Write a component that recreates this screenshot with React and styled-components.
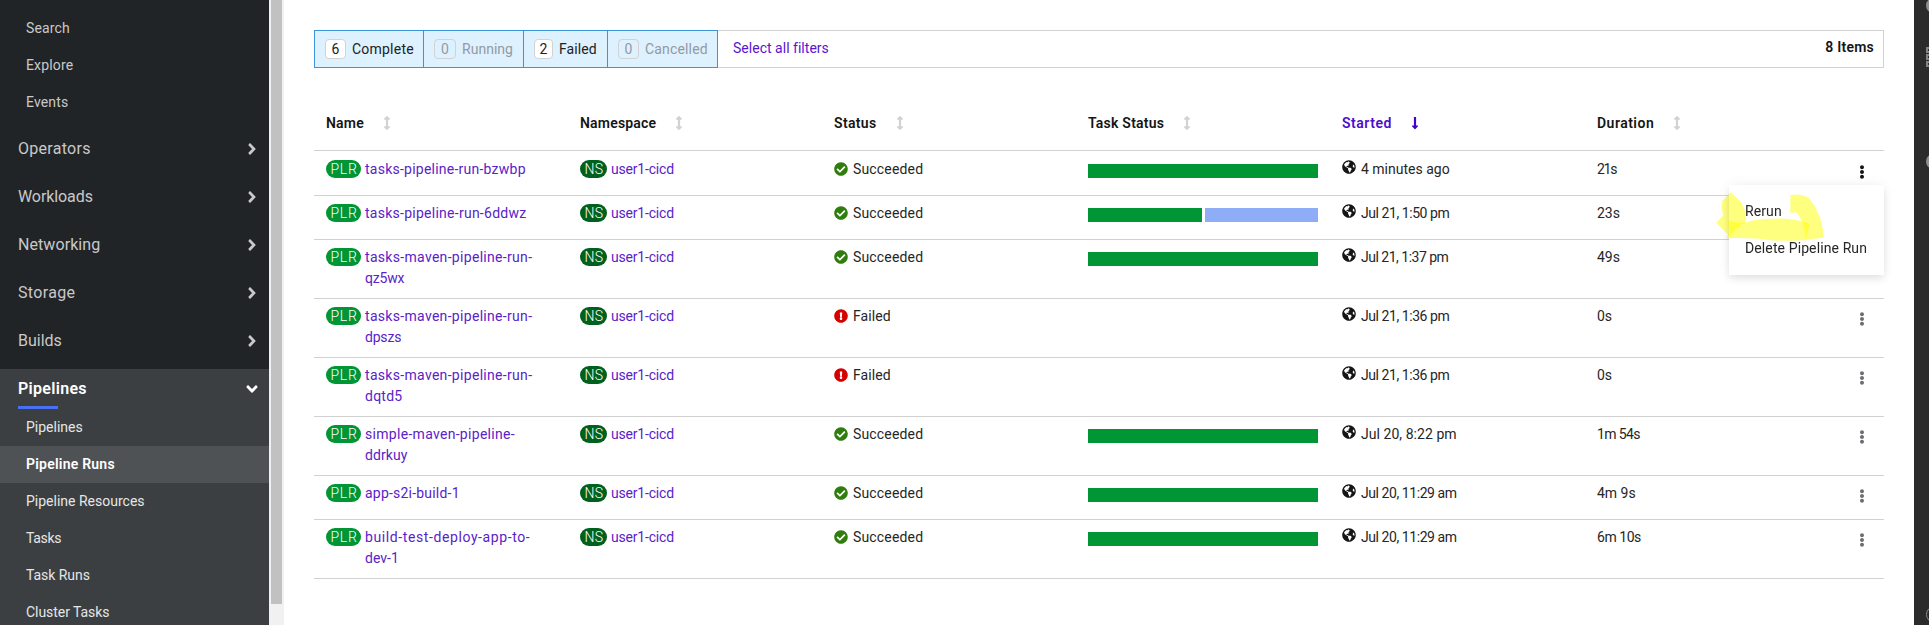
import React from 'react';
import styled, { createGlobalStyle } from 'styled-components';
import {
  FaAngleDown,
  FaAngleRight,
  FaArrowsAltV,
  FaCheckCircle,
  FaEllipsisV,
  FaExclamationCircle,
  FaGlobeAmericas,
  FaLongArrowAltDown,
} from 'react-icons/fa';

const GlobalStyle = createGlobalStyle`
  *, *::before, *::after { box-sizing: border-box; }
  body {
    margin: 0;
    overflow: hidden;
    background: #fff;
    color: #151515;
    font-family: Roboto, "Liberation Sans", sans-serif;
    font-size: 14px;
    line-height: 21px;
  }
  svg { display: block; flex: none; }
`;

const tracking = {
  Search: 0.13, Explore: 0.16, Events: 0.15, Operators: 0.29, Workloads: -0.09,
  Networking: 0.08, Storage: 0.33, Builds: 0, 'Pipeline Runs': 0.23,
  Tasks: -0.3, 'Task Runs': -0.05, 'Cluster Tasks': -0.05,
  Complete: 0.22, Running: 0.03, Failed: 0.09, Cancelled: 0.16,
  'Select all filters': 0.02, '8 Items': 0.24,
  Name: 0.2, Namespace: 0.19, Status: 0.35, 'Task Status': 0.23, Started: 0.52, Duration: 0.48,
  'tasks-pipeline-run-bzwbp': 0.24, 'tasks-pipeline-run-6ddwz': 0.26,
  'tasks-maven-pipeline-run-': 0.31, 'simple-maven-pipeline-': 0.3,
  'build-test-deploy-app-to-': 0.6, 'app-s2i-build-1': 0.21,
  qz5wx: -0.2, dpszs: -0.2, dqtd5: 0.25, ddrkuy: 0.1,
  'user1-cicd': -0.19, PLR: 0.77, NS: 0.5, Succeeded: 0.17,
  'Jul 21, 1:50 pm': -0.44, 'Jul 21, 1:37 pm': -0.5, 'Jul 21, 1:36 pm': -0.44,
  'Jul 20, 8:22 pm': 0.05, 'Jul 20, 11:29 am': -0.43,
  '21s': -1.3, '1m 54s': -0.6, '6m 10s': -0.46,
  Rerun: 0.11, 'Delete Pipeline Run': 0.11,
};

const TextRun = styled.span`
  letter-spacing: ${(p) => p.$track}px;
  white-space: nowrap;
`;

function Text({ children, track }) {
  return <TextRun $track={track ?? tracking[children] ?? 0}>{children}</TextRun>;
}

const Shell = styled.div`
  display: flex;
  width: 1929px;
  height: 625px;
  overflow: hidden;
`;

/* Sidebar */
const Sidebar = styled.nav`
  width: 269px;
  flex: none;
  padding-top: 10px;
  background: #212427;
  overflow: hidden;
`;

const NavSection = styled.div`
  margin-top: ${(p) => (p.$first ? 0 : 8)}px;
  background: ${(p) => (p.$current ? '#3c3f42' : 'transparent')};
`;

const NavGroup = styled.div`
  position: relative;
  display: flex;
  align-items: center;
  justify-content: space-between;
  height: 40px;
  padding: 0 8px 0 18px;
  font-size: 16px;
  line-height: 24px;
  font-weight: ${(p) => (p.$current ? 600 : 400)};
  color: ${(p) => (p.$current ? '#fff' : '#c9c9c9')};

  svg { width: 18px; height: 18px; margin-top: -1px; }

  &::after {
    content: '';
    display: ${(p) => (p.$current ? 'block' : 'none')};
    position: absolute;
    left: 18px;
    bottom: 0;
    width: 40px;
    height: 3px;
    background: #4a6ff5;
  }
`;

const NavItem = styled.div`
  height: 37px;
  padding: 8px 0 8px 26px;
  color: ${(p) => (p.$bright ? '#e6e6e6' : '#c9c9c9')};
  ${(p) => p.$selected && 'background: #4f5255; color: #fff; font-weight: 600;'}
`;

const ScrollTrack = styled.div`
  width: 15px;
  flex: none;
  padding: 0 2px;
  background: #f1f1f1;
`;

const ScrollThumb = styled.div`
  height: 604px;
  background: #c1c1c1;
`;

/* Filter toolbar */
const Main = styled.main`
  flex: 1;
  padding: 30px 30px 0;
  background: #fff;
`;

const Toolbar = styled.div`
  display: flex;
  height: 38px;
  border: 1px solid #d2d2d2;
  border-left: 0;
`;

const ChipGroup = styled.div`
  display: flex;
  height: 38px;
  margin-top: -1px;
  border: solid #3b95dc;
  border-width: 1px 0 1px 1px;
  background: #def1ff;
`;

const Chip = styled.div`
  display: flex;
  align-items: center;
  gap: 6px;
  width: ${(p) => p.$width}px;
  padding-left: 10px;
  border-right: 1px solid #3b95dc;
  color: ${(p) => (p.$muted ? '#939aa1' : '#222')};
`;

const Count = styled.span`
  width: ${(p) => p.$width}px;
  height: 20px;
  border: 1px solid #d2d2d2;
  border-radius: 4px;
  background: ${(p) => (p.$muted ? 'transparent' : '#fff')};
  line-height: 19px;
  text-align: center;
`;

const SelectAll = styled.a`
  padding: 7px 0 0 15px;
  color: #5a14d2;
`;

const ItemTotal = styled.div`
  margin-left: auto;
  padding: 6px 9px 0 0;
  font-weight: 600;
`;

/* Table */
const columns = '254px 254px 254px 254px 255px 1fr 44px';

const HeaderRow = styled.div`
  display: grid;
  grid-template-columns: ${columns};
  padding: 45px 0 16px;
  border-bottom: 1px solid #d2d2d2;
`;

const HeaderCell = styled.div`
  display: flex;
  align-items: center;
  padding-left: 12px;
  gap: 16px;
  font-weight: 600;
  color: ${(p) => (p.$active ? '#4a0dcc' : '#151515')};

  svg {
    width: 14px;
    height: 14px;
    margin-top: -1px;
    color: ${(p) => (p.$active ? '#4400cc' : '#d2d2d2')};
  }
`;

const Row = styled.div`
  display: grid;
  grid-template-columns: ${columns};
  min-height: ${(p) => (p.$first ? 45 : 44)}px;
  padding: ${(p) => (p.$first ? 8 : 7)}px 0 9px;
  border-bottom: 1px solid #d2d2d2;
`;

const Cell = styled.div`
  display: flex;
  align-items: flex-start;
  padding-left: 12px;
  color: #262626;
`;

const Badge = styled.span`
  flex: none;
  width: ${(p) => (p.$namespace ? 27 : 35)}px;
  height: 18px;
  margin: 1px 4px 0 0;
  padding-left: 1px;
  border-radius: 9px;
  background: ${(p) => (p.$namespace ? '#00601e' : '#009635')};
  color: #fff;
  font-weight: 300;
  line-height: 18px;
  text-align: center;
`;

const Link = styled.a`
  display: flex;
  flex-direction: column;
  color: #5a22c8;
`;

const StatusIcon = styled.span`
  margin: 3px 5px 0 0;
  font-size: 14px;
  color: ${(p) => (p.$failed ? '#d60000' : '#2f7d0c')};
`;

const Globe = styled.span`
  margin: 1px 5px 0 0;
  font-size: 14px;
  color: #151515;
`;

const TaskBar = styled.div`
  display: flex;
  gap: 3px;
  width: 230px;
  height: 14px;
  margin-top: 5px;
`;

const TaskSegment = styled.div`
  flex: 1;
  background: ${(p) => (p.$pending ? '#8fadf7' : '#009635')};
`;

const Kebab = styled.div`
  position: relative;
  padding: 6px 0 0 15px;
  font-size: 14px;
  color: ${(p) => (p.$open ? '#151515' : '#6a6e73')};
`;

const Menu = styled.div`
  position: absolute;
  z-index: 2;
  top: 26px;
  right: 0;
  width: 155px;
  padding: 8px 0;
  background: #fff;
  color: #262626;
  box-shadow: 0 4px 8px rgba(3, 3, 3, 0.09), 0 0 12px rgba(3, 3, 3, 0.06);
`;

const MenuItem = styled.div`
  height: 37px;
  padding: 8px 16px;
`;

const Marker = styled.svg`
  position: absolute;
  top: 5px;
  left: -15px;
  mix-blend-mode: multiply;
`;

/* Strip of the neighbouring window */
const EdgeStrip = styled.aside`
  display: flex;
  flex-direction: column;
  width: 15px;
  flex: none;
  padding-left: 12px;
  background: #2b2b2b;
  overflow: hidden;
`;

const EdgeDot = styled.div`
  width: 17px;
  height: 17px;
  margin-top: ${(p) => p.$gap}px;
  flex: none;
  border-radius: 50%;
  border: 1px solid #8f8f8f;
  background: ${(p) => (p.$hollow ? 'transparent' : '#8f8f8f')};
`;

const EdgeGrid = styled.div`
  display: flex;
  flex-direction: column;
  justify-content: space-between;
  width: 20px;
  height: 20px;
  margin-top: 33px;
`;

const EdgeSquare = styled.span`
  width: 6px;
  height: 6px;
  border: 2px solid #858585;
`;

const groups = ['Operators', 'Workloads', 'Networking', 'Storage', 'Builds'];
const pipelineItems = ['Pipelines', 'Pipeline Runs', 'Pipeline Resources', 'Tasks', 'Task Runs', 'Cluster Tasks'];

const chips = [
  { count: 6, label: 'Complete', width: 109, badge: 21 },
  { count: 0, label: 'Running', width: 100, badge: 22 },
  { count: 2, label: 'Failed', width: 84, badge: 19 },
  { count: 0, label: 'Cancelled', width: 110, badge: 21 },
];

const headers = ['Name', 'Namespace', 'Status', 'Task Status', 'Started', 'Duration'];

const runs = [
  { name: ['tasks-pipeline-run-bzwbp'], tasks: ['done'], started: '4 minutes ago', duration: '21s' },
  { name: ['tasks-pipeline-run-6ddwz'], tasks: ['done', 'pending'], started: 'Jul 21, 1:50 pm', duration: '23s' },
  { name: ['tasks-maven-pipeline-run-', 'qz5wx'], tasks: ['done'], started: 'Jul 21, 1:37 pm', duration: '49s' },
  { name: ['tasks-maven-pipeline-run-', 'dpszs'], failed: true, tasks: [], started: 'Jul 21, 1:36 pm', duration: '0s' },
  { name: ['tasks-maven-pipeline-run-', 'dqtd5'], failed: true, tasks: [], started: 'Jul 21, 1:36 pm', duration: '0s' },
  { name: ['simple-maven-pipeline-', 'ddrkuy'], tasks: ['done'], started: 'Jul 20, 8:22 pm', duration: '1m 54s' },
  { name: ['app-s2i-build-1'], tasks: ['done'], started: 'Jul 20, 11:29 am', duration: '4m 9s' },
  { name: ['build-test-deploy-app-to-', 'dev-1'], tasks: ['done'], started: 'Jul 20, 11:29 am', duration: '6m 10s' },
];

function Navigation() {
  return (
    <Sidebar>
      <NavSection $first>
        {['Search', 'Explore', 'Events'].map((item) => (
          <NavItem key={item}><Text>{item}</Text></NavItem>
        ))}
      </NavSection>
      {groups.map((group) => (
        <NavSection key={group}>
          <NavGroup><Text>{group}</Text><FaAngleRight /></NavGroup>
        </NavSection>
      ))}
      <NavSection $current>
        <NavGroup $current><Text track={0.3}>Pipelines</Text><FaAngleDown /></NavGroup>
        {pipelineItems.map((item) => (
          <NavItem key={item} $bright $selected={item === 'Pipeline Runs'}><Text>{item}</Text></NavItem>
        ))}
      </NavSection>
    </Sidebar>
  );
}

function ActionMenu() {
  return (
    <Menu>
      <MenuItem><Text>Rerun</Text></MenuItem>
      <MenuItem><Text>Delete Pipeline Run</Text></MenuItem>
      <Marker width="112" height="52" viewBox="462 525 336 156" fill="#ff0" fillOpacity="0.5">
        <path d="M512 532L542 560Q556 580 558 608L555 626L545 628L508 662L469 623L490 601Q482 578 487 558Z" />
        <path d="M505 617Q535 625 560 622Q590 610 640 611Q700 609 748 625L738 676Q640 680 598 671Q540 668 499 670L508 650Z" />
        <path d="M691 540Q725 534 746 549Q763 568 775 596Q788 620 791 668L738 674L734 650Q728 612 708 592L691 593Z" />
      </Marker>
    </Menu>
  );
}

function RunRow({ run, index }) {
  const StatusGlyph = run.failed ? FaExclamationCircle : FaCheckCircle;
  return (
    <Row $first={index === 0}>
      <Cell>
        <Badge><Text>PLR</Text></Badge>
        <Link>{run.name.map((line) => <Text key={line}>{line}</Text>)}</Link>
      </Cell>
      <Cell>
        <Badge $namespace><Text>NS</Text></Badge>
        <Link><Text>user1-cicd</Text></Link>
      </Cell>
      <Cell>
        <StatusIcon $failed={run.failed}><StatusGlyph /></StatusIcon>
        <Text>{run.failed ? 'Failed' : 'Succeeded'}</Text>
      </Cell>
      <Cell>
        <TaskBar>
          {run.tasks.map((task) => <TaskSegment key={task} $pending={task === 'pending'} />)}
        </TaskBar>
      </Cell>
      <Cell>
        <Globe><FaGlobeAmericas /></Globe>
        <Text>{run.started}</Text>
      </Cell>
      <Cell><Text>{run.duration}</Text></Cell>
      <Kebab $open={index === 0}>
        <FaEllipsisV />
        {index === 0 && <ActionMenu />}
      </Kebab>
    </Row>
  );
}

export default function App() {
  return (
    <Shell>
      <GlobalStyle />
      <Navigation />
      <ScrollTrack><ScrollThumb /></ScrollTrack>
      <Main>
        <Toolbar>
          <ChipGroup>
            {chips.map((chip) => (
              <Chip key={chip.label} $width={chip.width} $muted={chip.count === 0}>
                <Count $width={chip.badge} $muted={chip.count === 0}>{chip.count}</Count>
                <Text>{chip.label}</Text>
              </Chip>
            ))}
          </ChipGroup>
          <SelectAll><Text>Select all filters</Text></SelectAll>
          <ItemTotal><Text>8 Items</Text></ItemTotal>
        </Toolbar>
        <HeaderRow>
          {headers.map((header) => (
            <HeaderCell key={header} $active={header === 'Started'}>
              <Text>{header}</Text>
              {header === 'Started' ? <FaLongArrowAltDown /> : <FaArrowsAltV />}
            </HeaderCell>
          ))}
        </HeaderRow>
        {runs.map((run, index) => <RunRow key={run.name.join('')} run={run} index={index} />)}
      </Main>
      <EdgeStrip>
        <EdgeDot $gap={-3} />
        <EdgeGrid><EdgeSquare /><EdgeSquare /><EdgeSquare /></EdgeGrid>
        <EdgeDot $gap={86} />
        <EdgeDot $gap={436} $hollow />
      </EdgeStrip>
    </Shell>
  );
}
